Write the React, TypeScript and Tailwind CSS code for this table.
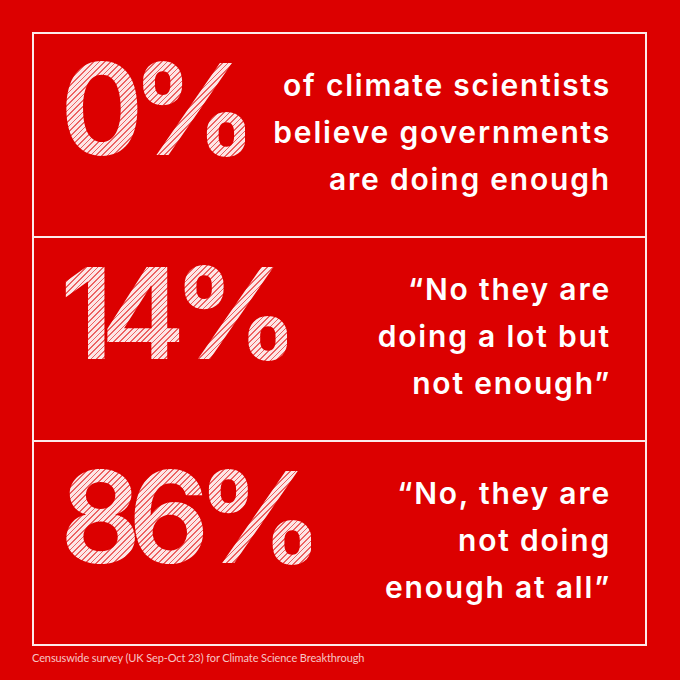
import React from 'react';

const rows = [
  { value: '0%', lines: ['of climate scientists', 'believe governments', 'are doing enough'] },
  { value: '14%', lines: ['“No they are', 'doing a lot but', 'not enough”'] },
  { value: '86%', lines: ['“No, they are', 'not doing', 'enough at all”'] },
];

const App = () => {
  return (
    <div className="w-[680px] h-[680px] bg-[#dc0000] pt-[32px] pl-[32px] font-['Inter',sans-serif]">
      <div className="w-[615px] h-[614px] border-2 border-[#fdeaea] flex flex-col">
        {rows.map((row, i) => (
          <div
            key={row.value}
            className={`flex-1 flex justify-between pl-[26px] pr-[34px] ${i > 0 ? 'border-t-2 border-[#fdeaea]' : ''}`}
          >
            {/* Big hatched figure */}
            <div className="pt-[12px] text-[127px] leading-none font-semibold tracking-[-13px] bg-[image:repeating-linear-gradient(135deg,#fde6e6_0_2.8px,#ec6262_2.8px_4px)] bg-clip-text text-transparent">
              {row.value}
            </div>
            <div className="pt-[28px] text-right text-white text-[30px] leading-[47px] font-semibold tracking-[1.8px] whitespace-nowrap">
              {row.lines.map((line) => (
                <div key={line}>{line}</div>
              ))}
            </div>
          </div>
        ))}
      </div>
      <p className="mt-[5px] text-[11px] leading-[14px] text-[#f7c4c4] font-['Lato',sans-serif] tracking-[-0.1px]">
        Censuswide survey (UK Sep-Oct 23) for Climate Science Breakthrough
      </p>
    </div>
  );
};

export default App;
